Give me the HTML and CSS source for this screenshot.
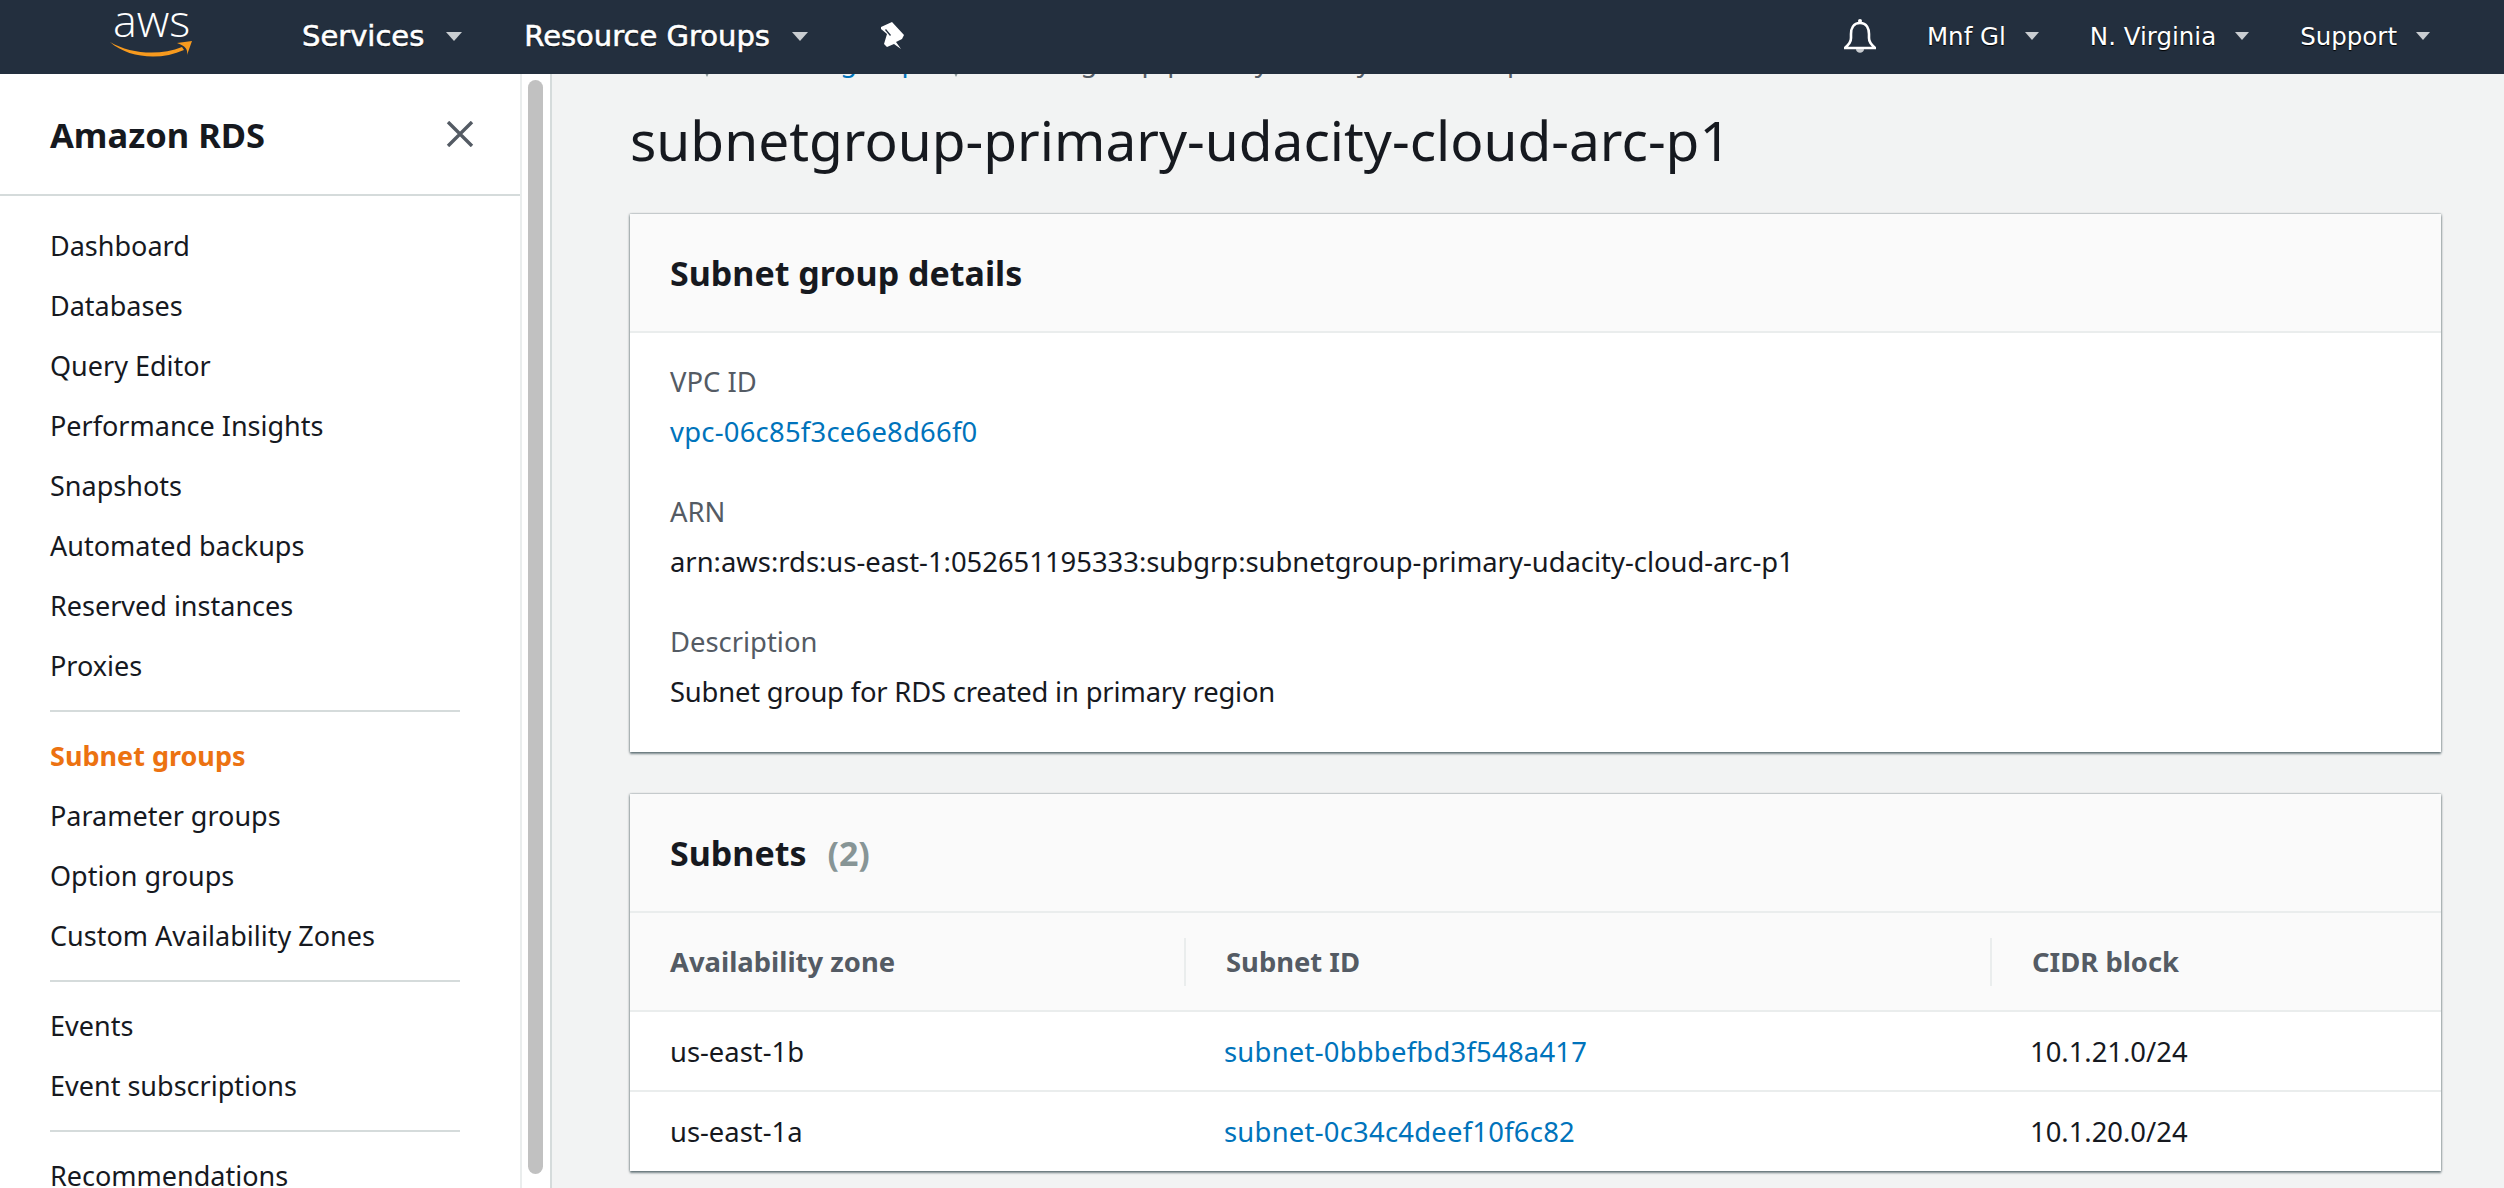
FILE: index.html
```html
<!DOCTYPE html>
<html lang="en">

<head>
    <meta charset="UTF-8">
    <meta name="viewport" content="width=device-width, initial-scale=1.0">
    <title>subnetgroup-primary-udacity-cloud-arc-p1</title>
    <link rel="stylesheet" href="styles.css">
</head>

<body>
    <header class="topbar">
        <div class="logo">
            <span class="logo-text">aws</span>
            <svg class="logo-smile" width="82" height="18" viewBox="0 0 82 18">
                <path d="M0 1C20 13 50 15 72 6L74 9C50 20 18 17 0 1Z" fill="#f79a1e" />
                <path d="M67 2L82 0L77 14C78 9 76 5 67 2Z" fill="#f79a1e" />
            </svg>
        </div>
        <nav class="topnav topnav-left">
            <a class="topnav-item strong">Services<span class="caret"></span></a>
            <a class="topnav-item strong">Resource Groups<span class="caret"></span></a>
            <svg class="pin" width="26" height="28" viewBox="0 0 26 28">
                <path fill-rule="evenodd" d="M2 5L13 0L25 13L23 17L17 20L22 27L15 22L8 25L5 22L8 12L2 7ZM6 8L11 14L12 13L7 7Z" fill="#fff" />
            </svg>
        </nav>
        <nav class="topnav topnav-right">
            <svg class="bell" width="32" height="34" viewBox="0 0 32 34">
                <path d="M16 4C9 4 7 10 7 15V19C7 23 5 25 1 29H31C27 25 25 23 25 19V15C25 10 23 4 16 4Z" fill="none" stroke="#fff" stroke-width="2.6" />
                <circle cx="16" cy="2" r="2" fill="#fff" />
                <path d="M12 30C12 35 20 35 20 30Z" fill="#c8ccd0" />
            </svg>
            <a class="topnav-item">Mnf Gl<span class="caret"></span></a>
            <a class="topnav-item">N. Virginia<span class="caret"></span></a>
            <a class="topnav-item">Support<span class="caret"></span></a>
        </nav>
    </header>

    <div class="layout">
        <aside class="sidebar">
            <div class="sidebar-head">
                <h2>Amazon RDS</h2>
                <svg class="close" width="28" height="26" viewBox="0 0 28 26">
                    <path d="M2 1L26 25M26 1L2 25" stroke="#545b64" stroke-width="3.4" />
                </svg>
            </div>
            <ul class="side-list first">
                <li>Dashboard</li>
                <li>Databases</li>
                <li>Query Editor</li>
                <li>Performance Insights</li>
                <li>Snapshots</li>
                <li>Automated backups</li>
                <li>Reserved instances</li>
                <li>Proxies</li>
            </ul>
            <ul class="side-list">
                <li class="active">Subnet groups</li>
                <li>Parameter groups</li>
                <li>Option groups</li>
                <li>Custom Availability Zones</li>
            </ul>
            <ul class="side-list">
                <li>Events</li>
                <li>Event subscriptions</li>
            </ul>
            <ul class="side-list">
                <li>Recommendations</li>
            </ul>
        </aside>
        <div class="scrolltrack"><div class="scrollthumb"></div></div>

        <main class="content">
            <div class="crumbs">
                <a class="link">RDS</a>
                <span class="crumb-sep"></span>
                <a class="link">Subnet groups</a>
                <span class="crumb-sep"></span>
                <span class="crumb-current">subnetgroup-primary-udacity-cloud-arc-p1</span>
            </div>
            <h1>subnetgroup-primary-udacity-cloud-arc-p1</h1>

            <section class="card">
                <div class="card-head">
                    <h3>Subnet group details</h3>
                </div>
                <div class="card-body">
                    <div class="field">
                        <div class="field-label">VPC ID</div>
                        <a class="link">vpc-06c85f3ce6e8d66f0</a>
                    </div>
                    <div class="field">
                        <div class="field-label">ARN</div>
                        <div>arn:aws:rds:us-east-1:052651195333:subgrp:subnetgroup-primary-udacity-cloud-arc-p1</div>
                    </div>
                    <div class="field">
                        <div class="field-label">Description</div>
                        <div class="field-text">Subnet group for RDS created in primary region</div>
                    </div>
                </div>
            </section>

            <section class="card">
                <div class="card-head">
                    <h3>Subnets <span class="count">(2)</span></h3>
                </div>
                <table class="subnets">
                    <thead>
                        <tr>
                            <th class="col-az"><span>Availability zone</span></th>
                            <th class="col-id"><span>Subnet ID</span></th>
                            <th><span>CIDR block</span></th>
                        </tr>
                    </thead>
                    <tbody>
                        <tr>
                            <td>us-east-1b</td>
                            <td><a class="link">subnet-0bbbefbd3f548a417</a></td>
                            <td>10.1.21.0/24</td>
                        </tr>
                        <tr>
                            <td>us-east-1a</td>
                            <td><a class="link">subnet-0c34c4deef10f6c82</a></td>
                            <td>10.1.20.0/24</td>
                        </tr>
                    </tbody>
                </table>
            </section>
        </main>
    </div>
</body>

</html>
```

FILE: styles.css
```css
* {
    box-sizing: border-box;
}

html,
body {
    height: 100%;
}

body {
    margin: 0;
    overflow: hidden;
    display: flex;
    flex-direction: column;
    font-family: 'Noto Sans', sans-serif;
    font-size: 27.4px;
    color: #16191f;
    background-color: #f2f3f3;
}

/* top bar */
.topbar {
    position: relative;
    z-index: 2;
    flex: none;
    height: 74px;
    display: flex;
    align-items: center;
    background-color: #232f3e;
    color: #fff;
}

.logo {
    flex: none;
    width: 302px;
    height: 74px;
    padding-left: 110px;
    display: flex;
    flex-direction: column;
}

.logo-text {
    height: 31px;
    margin: 4px 0 0 3px;
    font-family: 'Open Sans', sans-serif;
    font-size: 45px;
    line-height: 31px;
    font-weight: 300;
}

.logo-smile {
    margin-top: 6px;
}

.topnav {
    display: flex;
    align-items: center;
    padding-bottom: 2px;
}

.topnav-left {
    gap: 62px;
}

.topnav-right {
    margin-left: auto;
    padding-right: 74px;
    gap: 51px;
}

.topnav-item {
    display: flex;
    align-items: center;
    font-family: 'DejaVu Sans', sans-serif;
    font-size: 24.5px;
    white-space: nowrap;
    text-shadow: 0 1px 1px #000;
}

.topnav-item.strong {
    font-size: 29px;
    -webkit-text-stroke: 0.6px #fff;
}

.caret {
    width: 0;
    height: 0;
    margin-left: 19px;
    border-left: 7px solid transparent;
    border-right: 7px solid transparent;
    border-top: 8px solid #c9cdd1;
}

.strong .caret {
    margin-left: 22px;
    border-left-width: 8px;
    border-right-width: 8px;
    border-top-width: 9px;
}

.pin {
    margin-left: 9px;
}

/* page below the bar */
.layout {
    flex: 1;
    min-height: 0;
    display: flex;
}

.sidebar {
    flex: none;
    width: 522px;
    background-color: #fff;
    border-right: 2px solid #eaeded;
    overflow: hidden;
}

.sidebar-head {
    height: 122px;
    padding: 0 50px;
    display: flex;
    align-items: center;
    justify-content: space-between;
    border-bottom: 2px solid #d5dbdb;
}

.sidebar-head h2 {
    margin: 0;
    font-size: 34.5px;
    font-weight: 700;
}

.close {
    margin-right: -4px;
}

.side-list {
    list-style: none;
    margin: 0 60px 0 50px;
    padding: 14px 0;
    font-size: 27px;
    border-bottom: 2px solid #d5dbdb;
}

.side-list.first {
    padding-top: 20px;
}

.side-list li {
    height: 60px;
    line-height: 60px;
    white-space: nowrap;
}

.side-list li.active {
    color: #ec7211;
    font-weight: 700;
}

.scrolltrack {
    flex: none;
    width: 30px;
    padding: 6px 7px 14px 6px;
    background-color: #fff;
    border-right: 2px solid #d5dbdb;
}

.scrollthumb {
    height: 100%;
    background-color: #c1c1c1;
    border-radius: 8px;
}

/* main column */
.content {
    flex: 1;
    min-width: 0;
    padding: 0 63px 0 78px;
}

.crumbs {
    height: 30px;
    margin-top: -29px;
    display: flex;
    align-items: center;
    white-space: nowrap;
}

.crumb-current {
    color: #545b64;
}

.crumb-sep {
    flex: none;
    align-self: flex-end;
    width: 0;
    height: 0;
    margin: 0 30px -2px 20px;
    border-left: 5px solid transparent;
    border-right: 5px solid transparent;
    border-top: 10px solid #879596;
}

h1 {
    margin: 0;
    height: 139px;
    padding-top: 28px;
    line-height: 74px;
    font-size: 55px;
    font-weight: 400;
    white-space: nowrap;
}

.card {
    margin-bottom: 42px;
    background-color: #fff;
    box-shadow: 0 2px 2px rgba(0, 28, 36, 0.5), 0 -1px 1px rgba(0, 28, 36, 0.06), 1px 0 2px rgba(0, 28, 36, 0.2), -1px 0 2px rgba(0, 28, 36, 0.2);
}

.card-head {
    height: 119px;
    padding: 0 40px;
    display: flex;
    align-items: center;
    background-color: #fafafa;
    border-bottom: 2px solid #eaeded;
}

.card-head h3 {
    margin: 0;
    font-size: 34px;
    font-weight: 700;
}

.count {
    margin-left: 12px;
    color: #879596;
    font-weight: 700;
}

.card-body {
    padding: 24px 40px 5px;
}

.field {
    height: 130px;
    line-height: 50px;
    white-space: nowrap;
}

.field-label {
    color: #545b64;
}

.field-text {
    letter-spacing: -0.2px;
}

.link {
    color: #0073bb;
}

.field .link,
.subnets .link {
    letter-spacing: 0.25px;
}

.subnets {
    width: 100%;
    border-collapse: collapse;
    table-layout: fixed;
}

.subnets th {
    height: 98px;
    padding: 0 0 0 40px;
    text-align: left;
    background-color: #fafafa;
    border-bottom: 2px solid #eaeded;
    color: #545b64;
    font-weight: 700;
}

.subnets th span {
    display: block;
    line-height: 48px;
}

.subnets th.col-az {
    width: 554px;
}

.subnets th.col-id {
    width: 806px;
}

.subnets th + th span {
    border-left: 2px solid #eaeded;
    margin-left: -40px;
    padding-left: 40px;
}

.subnets td {
    height: 80px;
    padding: 0 0 0 40px;
    border-bottom: 2px solid #eaeded;
}

.subnets tr:last-child td {
    border-bottom: none;
}
```
